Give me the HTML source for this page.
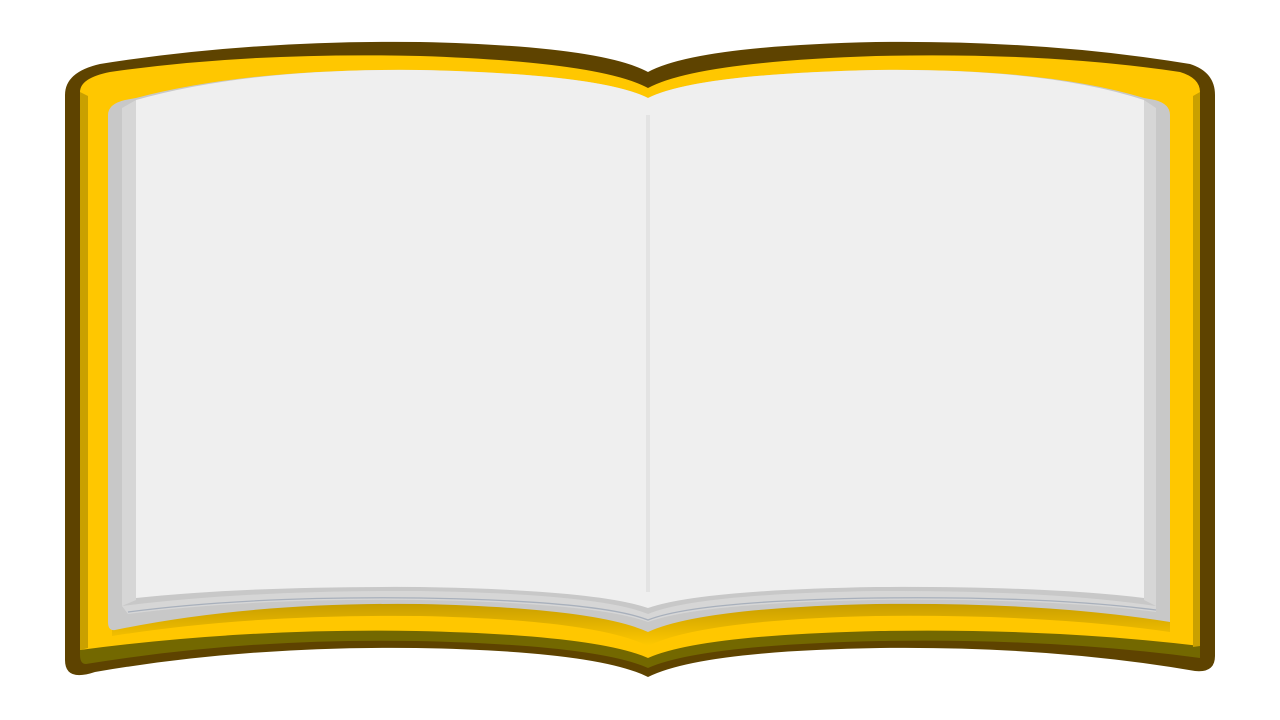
<!DOCTYPE html>
<html><head><style>html,body{margin:0;padding:0;background:#fff;width:1280px;height:720px;overflow:hidden}</style></head>
<body>
<svg width="1280" height="720" viewBox="0 0 1280 720" xmlns="http://www.w3.org/2000/svg">
<defs>
<linearGradient id="ys" x1="0" y1="0" x2="0" y2="1">
<stop offset="0" stop-color="#c39a00"/><stop offset="1" stop-color="#ffc800"/>
</linearGradient>
</defs>
<path d="M65 95 Q65 72 100 64 Q250 40 420 42 Q600 46 648 72 Q696 46 876 42 Q1046 40 1190 64 Q1215 72 1215 95 L1215 656 Q1215 673 1195 671 Q1050 646 880 648 Q700 651 648 677 Q596 651 416 648 Q246 646 95 672 Q65 682 65 660 Z" fill="#5e4300"/>
<path d="M80 92 L1200 92 L1200 658 Q1050 638 880 641 Q700 645 648 668 Q596 645 416 641 Q246 638 86 664 Q80 664 80 655 Z" fill="#736800"/>
<path d="M80 92 Q80 78 110 72 Q250 52 420 56 Q600 62 648 88 Q696 62 876 56 Q1046 52 1180 72 Q1200 78 1200 92 L1200 646 Q1050 628 880 631 Q700 635 648 658 Q596 635 416 631 Q246 628 80 650 Z" fill="#ffc700"/>
<path d="M80 92 L88 96 L88 648 L80 650 Z" fill="#c9a000"/>
<path d="M1200 92 L1193 96 L1193 647 L1200 646 Z" fill="#c9a000"/>
<path d="M112 618 Q250 598 420 600 Q600 604 648 628 Q696 604 876 600 Q1046 598 1170 618 L1170 632 Q1046 614 876 616 Q700 620 648 646 Q596 620 420 616 Q250 614 112 636 Z" fill="url(#ys)"/>
<path d="M108 115 Q108 104 125 100 L136 98 Q250 68 420 70 Q600 74 648 98 Q696 74 876 70 Q1046 68 1144 98 L1155 100 Q1170 104 1170 115 L1170 622 Q1046 602 876 604 Q700 608 648 632 Q596 608 420 604 Q250 602 115 630 Q108 631 108 622 Z" fill="#c8c8c8"/>
<path d="M122 108 L136 100 L136 600 L122 606 Z" fill="#d6d6d6"/>
<path d="M1156 108 L1144 100 L1144 600 L1156 606 Z" fill="#d6d6d6"/>
<path d="M122 606 Q250 590 420 591 Q600 594 648 614 Q696 594 876 591 Q1046 590 1156 606 L1156 612 Q1046 598 876 600 Q700 603 648 622 Q596 603 420 600 Q250 598 128 614 Z" fill="#d6d6d6"/>
<path d="M128 612 Q250 596 420 598 Q600 601 648 620 Q696 601 876 598 Q1046 596 1156 610" fill="none" stroke="#a8b0bc" stroke-width="1.3"/>
<path d="M136 100 Q250 68 420 70 Q600 74 648 98 Q696 74 876 70 Q1046 68 1144 100 L1144 598 Q1046 586 876 587 Q700 590 648 608 Q596 590 420 587 Q250 586 136 598 Z" fill="#efefef"/>
<line x1="648" y1="115" x2="648" y2="592" stroke="#e3e3e3" stroke-width="4"/>
</svg>
</body></html>
